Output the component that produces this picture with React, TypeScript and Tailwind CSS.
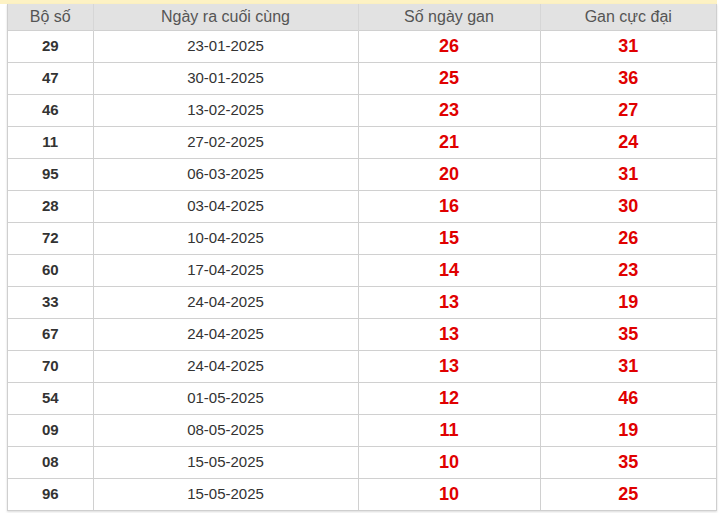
const rows: [string, string, number, number][] = [
  ["29", "23-01-2025", 26, 31],
  ["47", "30-01-2025", 25, 36],
  ["46", "13-02-2025", 23, 27],
  ["11", "27-02-2025", 21, 24],
  ["95", "06-03-2025", 20, 31],
  ["28", "03-04-2025", 16, 30],
  ["72", "10-04-2025", 15, 26],
  ["60", "17-04-2025", 14, 23],
  ["33", "24-04-2025", 13, 19],
  ["67", "24-04-2025", 13, 35],
  ["70", "24-04-2025", 13, 31],
  ["54", "01-05-2025", 12, 46],
  ["09", "08-05-2025", 11, 19],
  ["08", "15-05-2025", 10, 35],
  ["96", "15-05-2025", 10, 25],
]

export default function App() {
  return (
    <div className="w-[724px] h-[513px] bg-white font-['Liberation_Sans',Arial,sans-serif]">
      <div className="w-[717px] h-1 bg-[#fdf2c4]" />
      <div className="ml-[7px] w-[710px] border border-t-0 border-[#cfcfcf] shadow-[0_1px_2px_rgba(0,0,0,0.15)]">
        <table className="w-full border-collapse table-fixed">
          <colgroup>
            <col className="w-[85px]" />
            <col className="w-[265px]" />
            <col className="w-[182px]" />
            <col />
          </colgroup>
          <thead>
            <tr className="h-[26px] bg-[#e2e2e2] text-[16px] leading-none text-[#555]">
              <th className="font-normal border-r border-[#d6d6d6] pt-px">Bộ số</th>
              <th className="font-normal border-r border-[#d6d6d6] pt-px">Ngày ra cuối cùng</th>
              <th className="font-normal border-r border-[#d6d6d6] pt-px">Số ngày gan</th>
              <th className="font-normal pt-px">Gan cực đại</th>
            </tr>
          </thead>
          <tbody>
            {rows.map(([num, date, gan, max], i) => (
              <tr key={i} className="h-8 border-t border-[#d0d0d0] text-center">
                <td className="border-r border-[#d0d0d0] text-[15px] font-bold text-[#333]">{num}</td>
                <td className="border-r border-[#d0d0d0] text-[15px] text-[#333]">{date}</td>
                <td className="border-r border-[#d0d0d0] text-[18px] font-bold text-[#e00000]">{gan}</td>
                <td className="text-[18px] font-bold text-[#e00000]">{max}</td>
              </tr>
            ))}
          </tbody>
        </table>
      </div>
    </div>
  )
}
